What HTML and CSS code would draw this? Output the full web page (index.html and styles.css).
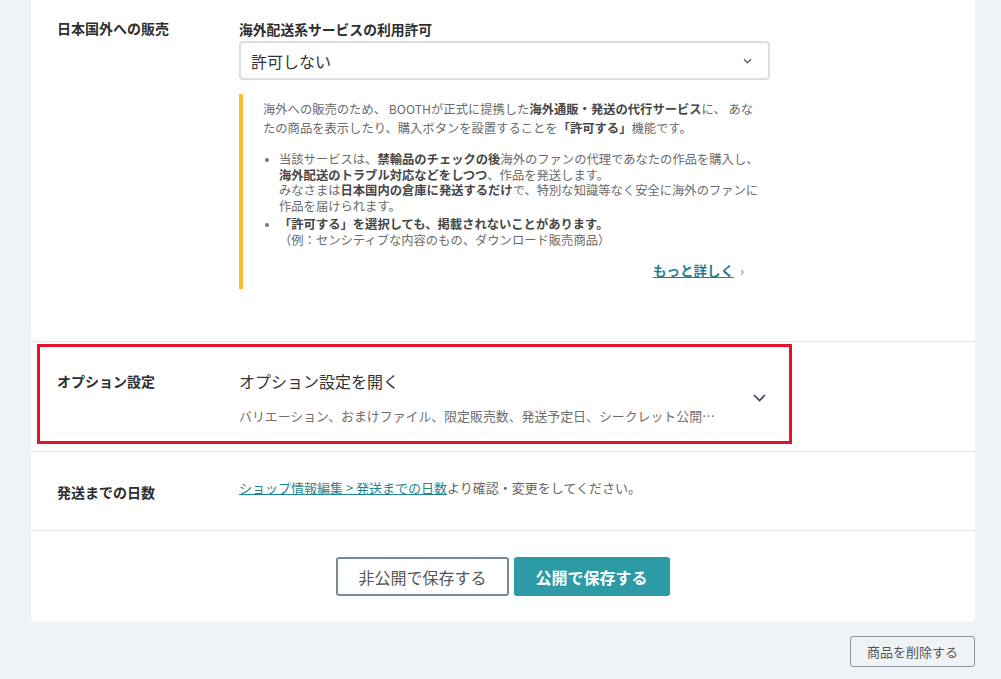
FILE: index.html
```html
<!DOCTYPE html>
<html lang="ja">
<head>
<meta charset="utf-8">
<title>商品編集</title>
<link rel="stylesheet" href="styles.css">
</head>
<body>
<div class="page">
  <div class="card">
    <section class="row row-intl">
      <div class="label">日本国外への販売</div>
      <div class="content">
        <div class="field-title">海外配送系サービスの利用許可</div>
        <div class="select">
          <span>許可しない</span>
          <svg class="select-chev" width="9" height="6" viewBox="0 0 9 6"><path d="M1 1.2 L4.5 4.6 L8 1.2" fill="none" stroke="#4a4f58" stroke-width="1.2"/></svg>
        </div>
        <div class="notice">
          <p class="notice-lead">海外への販売のため、 BOOTHが正式に提携した<b>海外通販・発送の代行サービス</b>に、 あなたの商品を表示したり、購入ボタンを設置することを<b>「許可する」</b>機能です。</p>
          <ul class="notice-list">
            <li>当該サービスは、<b>禁輸品のチェックの後</b>海外のファンの代理であなたの作品を購入し、<b>海外配送のトラブル対応などをしつつ</b>、作品を発送します。<br>みなさまは<b>日本国内の倉庫に発送するだけ</b>で、特別な知識等なく安全に海外のファンに作品を届けられます。</li>
            <li><b>「許可する」を選択しても、掲載されないことがあります。</b><br>（例：センシティブな内容のもの、ダウンロード販売商品）</li>
          </ul>
          <div class="more"><a href="#">もっと詳しく</a><span class="more-arrow">›</span></div>
        </div>
      </div>
    </section>

    <section class="row row-option">
      <div class="label">オプション設定</div>
      <div class="content option">
        <div class="option-text">
          <div class="option-title">オプション設定を開く</div>
          <div class="option-sub">バリエーション、おまけファイル、限定販売数、発送予定日、シークレット公開…</div>
        </div>
        <svg class="option-chev" width="13" height="8" viewBox="0 0 13 8"><path d="M1 1 L6.5 6.5 L12 1" fill="none" stroke="#3a4150" stroke-width="1.6"/></svg>
      </div>
      <div class="highlight"></div>
    </section>

    <section class="row row-days">
      <div class="label">発送までの日数</div>
      <div class="content"><a href="#">ショップ情報編集 &gt; 発送までの日数</a>より確認・変更をしてください。</div>
    </section>

    <section class="row actions">
      <button class="btn btn-secondary">非公開で保存する</button>
      <button class="btn btn-primary">公開で保存する</button>
    </section>
  </div>
  <div class="footer">
    <button class="btn-delete">商品を削除する</button>
  </div>
</div>
</body>
</html>
```
FILE: styles.css
```css
* { box-sizing: border-box; }
html, body { margin: 0; padding: 0; }
body {
  background: #eff3f6;
  font-family: "Noto Sans CJK JP", "Noto Sans", sans-serif;
  color: #333;
  height: 679px;
  overflow: hidden;
}
.page {
  padding-left: 31px;
  width: 975px;
}
.card {
  background: #fff;
  border-radius: 0 0 4px 4px;
}
.row {
  display: grid;
  grid-template-columns: 182px 531px;
  padding: 0 26px;
  border-top: 1px solid #e6e6e6;
  position: relative;
}
.row:first-child { border-top: none; }
.label {
  font-size: 14px;
  line-height: 20px;
  font-weight: bold;
  color: #2e2e2e;
}
.row-intl { padding-top: 18px; padding-bottom: 52px; }
.field-title {
  font-size: 13.8px;
  line-height: 20px;
  font-weight: bold;
  color: #2e2e2e;
  margin-top: 1px;
}
.select {
  margin-top: 2px;
  height: 39px;
  border: 2px solid #dadde2;
  border-radius: 4px;
  display: flex;
  align-items: center;
  justify-content: space-between;
  padding: 0 16px 0 10px;
  font-size: 16px;
  color: #333;
}
.select-chev { margin-top: 1px; }
.notice {
  margin-top: 14px;
  border-left: 4px solid #fbbd2b;
  padding: 6px 2px 9px 20px;
  color: #6b6b6b;
  font-size: 12.3px;
}
.notice b { color: #464646; font-weight: bold; }
.notice-lead {
  margin: 0;
  line-height: 19px;
  padding-right: 4px;
}
.notice-list {
  list-style: none;
  margin: 14px 0 0;
  padding: 0;
}
.notice-list li {
  position: relative;
  padding-left: 16px;
  line-height: 15.5px;
  margin-bottom: 3px;
}
.notice-list li::before {
  content: "";
  position: absolute;
  left: 2px;
  top: 6px;
  width: 4px;
  height: 4px;
  border-radius: 50%;
  background: #777;
}
.more {
  text-align: right;
  margin-top: 12px;
  font-size: 13.5px;
  line-height: 20px;
  padding-right: 24px;
}
.more a {
  color: #1f7f8a;
  text-decoration: underline;
  font-weight: bold;
}
.more-arrow {
  color: #888;
  margin-left: 6px;
}
.row-option { padding-top: 27px; padding-bottom: 25px; }
.row-option .label { padding-top: 2px; }
.option {
  display: flex;
  align-items: center;
  justify-content: space-between;
  padding-right: 4px;
}
.option-title {
  font-size: 16px;
  line-height: 24px;
  color: #333;
}
.option-sub {
  margin-top: 13px;
  font-size: 12.9px;
  line-height: 20px;
  color: #6e6e6e;
  white-space: nowrap;
}
.highlight {
  position: absolute;
  left: 6px;
  top: 2px;
  width: 755px;
  height: 100px;
  border: 3px solid #e8112b;
  pointer-events: none;
}
.row-days { padding-top: 26px; padding-bottom: 28px; }
.row-days .label { padding-top: 4px; }
.row-days .content {
  font-size: 13px;
  line-height: 20px;
  color: #666;
}
.row-days .content a { color: #1f8590; text-decoration: underline; }
.actions {
  display: flex;
  justify-content: center;
  gap: 5px;
  padding: 26px 0;
}
.btn {
  height: 39px;
  border-radius: 3px;
  font-family: inherit;
  font-size: 16px;
  padding: 0 20px;
  cursor: pointer;
}
.btn-secondary {
  background: #fff;
  border: 2px solid #7e8898;
  color: #555;
}
.btn-primary {
  background: #2d9ba6;
  border: 2px solid #2d9ba6;
  color: #fff;
  font-weight: bold;
}
.footer {
  display: flex;
  justify-content: flex-end;
  margin-top: 14px;
}
.btn-delete {
  height: 31px;
  padding: 0 16px;
  background: transparent;
  border: 1px solid #8b94a3;
  border-radius: 3px;
  font-family: inherit;
  font-size: 13px;
  color: #555;
}
```
